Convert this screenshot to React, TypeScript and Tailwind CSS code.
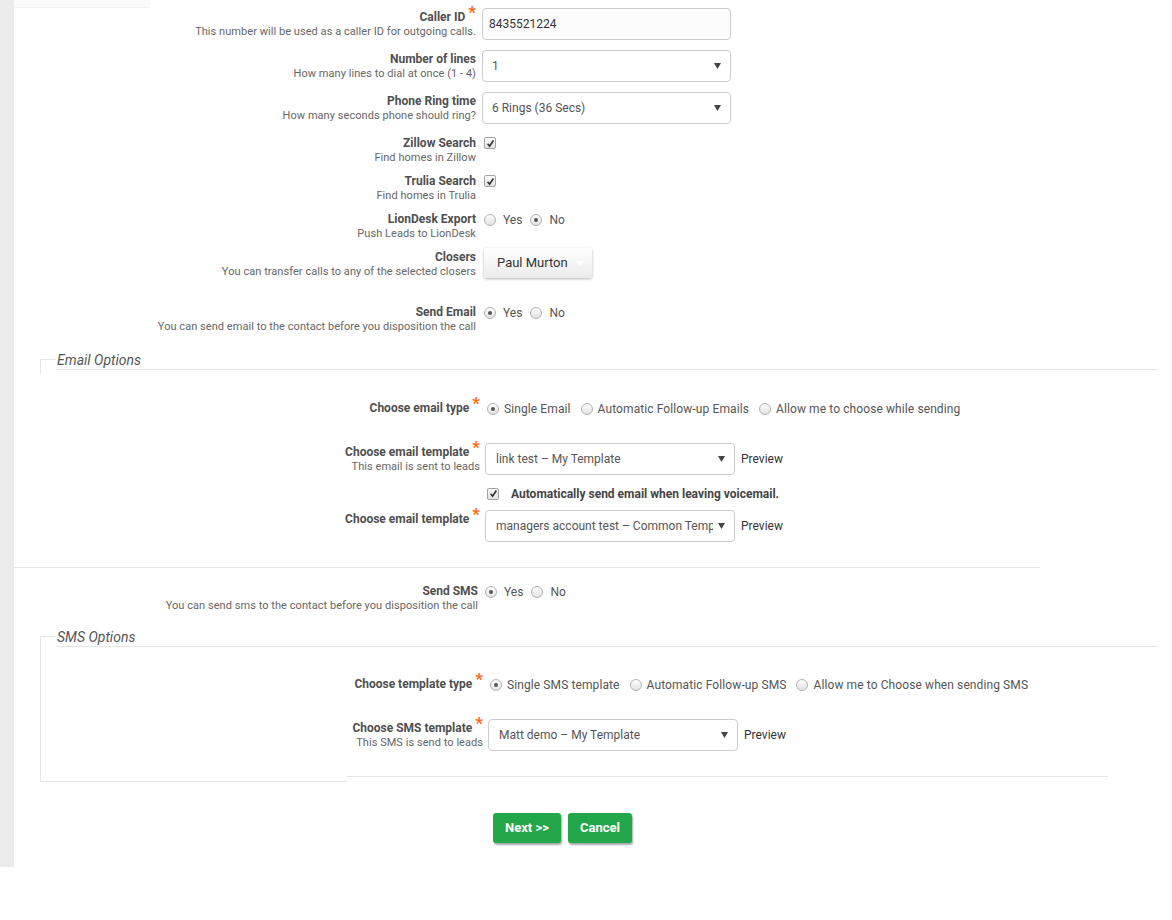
import React from 'react'

function Star() {
  return <span className="relative top-[-3px] ml-[3px] text-[17px] leading-[0] font-bold text-[#ff6a13]">*</span>
}

function Label({ title, desc, req, className }: { title: string; desc?: string; req?: boolean; className: string }) {
  return (
    <div className={`shrink-0 pt-[2px] text-right ${className}`}>
      <div className="text-[12px] leading-[15px] font-bold whitespace-nowrap text-[#4f4f4f]">
        {title}
        {req && <Star />}
      </div>
      {desc && <div className="text-[11px] leading-[14px] tracking-[0.05px] whitespace-nowrap text-[#666]">{desc}</div>}
    </div>
  )
}

function Caret() {
  return (
    <svg width="7" height="6" viewBox="0 0 7 6" className="shrink-0">
      <path d="M0 0h7L3.5 6z" fill="#444" />
    </svg>
  )
}

function Select({ value, className, textClass = '' }: { value: string; className: string; textClass?: string }) {
  return (
    <div className={`flex h-[32px] items-center justify-between rounded-[4px] border border-[#ccc] bg-white pr-[9px] text-[12px] text-[#555] ${className}`}>
      <span className={`overflow-hidden whitespace-nowrap ${textClass}`}>{value}</span>
      <Caret />
    </div>
  )
}

function Radio({ on }: { on?: boolean }) {
  return (
    <span className="flex h-[12px] w-[12px] shrink-0 items-center justify-center rounded-full border border-[#b3b3b3] bg-linear-to-b from-[#fdfdfd] to-[#e3e3e3]">
      {on && <span className="h-[4px] w-[4px] rounded-full bg-[#555]" />}
    </span>
  )
}

function Check() {
  return (
    <span className="flex h-[12px] w-[12px] shrink-0 items-center justify-center rounded-[2px] border border-[#a3a3a3] bg-linear-to-b from-white to-[#e2e2e2]">
      <svg width="9" height="9" viewBox="0 0 9 9">
        <path d="M1.6 4.8l2 2.4 3.8-5.6" fill="none" stroke="#333" strokeWidth="1.7" />
      </svg>
    </span>
  )
}

function Opt({ on, label, first }: { on?: boolean; label: string; first?: boolean }) {
  return (
    <span className={`flex items-center ${first ? '' : 'ml-[10px]'}`}>
      <Radio on={on} />
      <span className="ml-[5px] text-[12px] tracking-[0.1px] whitespace-nowrap text-[#555]">{label}</span>
    </span>
  )
}

function YesNo({ yes, className }: { yes: boolean; className: string }) {
  return (
    <div className={`mt-[2px] flex h-[15px] items-center text-[12px] text-[#555] ${className}`}>
      <Radio on={yes} />
      <span className="ml-[7px]">Yes</span>
      <span className="ml-[8px]"><Radio on={!yes} /></span>
      <span className="ml-[7px]">No</span>
    </div>
  )
}

function Legend({ text, stretch }: { text: string; stretch?: boolean }) {
  return (
    <div className="ml-[26px] flex items-start">
      <div className={`mt-[8px] w-[16px] border-t border-l border-[#e6e6e6] ${stretch ? 'self-stretch' : 'h-[15px]'}`} />
      <div className="flex-1 border-b border-[#e6e6e6] pl-[1px] text-[14px] leading-[18px] italic text-[#555]">{text}</div>
    </div>
  )
}

export default function App() {
  return (
    <div className="flex bg-white font-['Roboto',sans-serif]">
      <div className="w-[14px] shrink-0 bg-[#ebebeb]" />
      <div className="w-[1144px] pb-[24px]">
        <div className="h-[8px] w-[136px] border-b border-[#f2f2f2] bg-[#fafafa]" />

        <div className="flex items-start">
          <Label className="w-[462px]" title="Caller ID" req desc="This number will be used as a caller ID for outgoing calls." />
          <div className="ml-[6px] flex h-[32px] w-[249px] items-center rounded-[4px] border border-[#ccc] bg-[#fcfcfc] pl-[6px] text-[12px] text-[#333]">8435521224</div>
        </div>

        <div className="mt-[10px] flex items-start">
          <Label className="w-[462px]" title="Number of lines" desc="How many lines to dial at once (1 - 4)" />
          <Select className="ml-[6px] w-[249px] pl-[9px]" value="1" />
        </div>

        <div className="mt-[10px] flex items-start">
          <Label className="w-[462px]" title="Phone Ring time" desc="How many seconds phone should ring?" />
          <Select className="ml-[6px] w-[249px] pl-[9px]" value="6 Rings (36 Secs)" />
        </div>

        <div className="mt-[10px] flex items-start">
          <Label className="w-[462px]" title="Zillow Search" desc="Find homes in Zillow" />
          <div className="mt-[3px] ml-[8px]"><Check /></div>
        </div>

        <div className="mt-[7px] flex items-start">
          <Label className="w-[462px]" title="Trulia Search" desc="Find homes in Trulia" />
          <div className="mt-[3px] ml-[8px]"><Check /></div>
        </div>

        <div className="mt-[7px] flex items-start">
          <Label className="w-[462px]" title="LionDesk Export" desc="Push Leads to LionDesk" />
          <YesNo yes={false} className="ml-[8px]" />
        </div>

        <div className="mt-[7px] flex items-start">
          <Label className="w-[462px]" title="Closers" desc="You can transfer calls to any of the selected closers" />
          <div className="ml-[8px] flex h-[30px] w-[108px] items-center rounded-[2px] bg-linear-to-b from-white to-[#ebebeb] pl-[13px] text-[13px] text-[#333] shadow-[0_1px_3px_rgba(0,0,0,0.3)]">
            Paul Murton
            <svg width="8" height="5" viewBox="0 0 8 5" className="ml-[8px]">
              <path d="M0 0h8L4 5z" fill="#fff" />
            </svg>
          </div>
        </div>

        <div className="mt-[24px] flex items-start">
          <Label className="w-[462px]" title="Send Email" desc="You can send email to the contact before you disposition the call" />
          <YesNo yes className="ml-[8px]" />
        </div>

        <div className="mt-[17px]">
          <Legend text="Email Options" />
        </div>

        <div className="mt-[25px] flex items-start">
          <Label className="w-[466px]" title="Choose email type" req />
          <div className="mt-[2px] ml-[7px] flex h-[15px] items-center">
            <Opt first on label="Single Email" />
            <Opt label="Automatic Follow-up Emails" />
            <Opt label="Allow me to choose while sending" />
          </div>
        </div>

        <div className="mt-[27px] flex items-start">
          <Label className="w-[466px]" title="Choose email template" req desc="This email is sent to leads" />
          <div className="ml-[5px] flex items-center">
            <Select className="w-[250px] pl-[10px]" value="link test – My Template" />
            <span className="ml-[6px] text-[12px] text-[#333]">Preview</span>
          </div>
        </div>

        <div className="mt-[10px] ml-[473px] flex h-[17px] items-center">
          <Check />
          <span className="ml-[12px] text-[12px] font-bold text-[#444]">Automatically send email when leaving voicemail.</span>
        </div>

        <div className="mt-[8px] flex items-start">
          <Label className="w-[466px]" title="Choose email template" req />
          <div className="ml-[5px] flex items-center">
            <Select className="w-[250px] pl-[10px]" textClass="w-[217px]" value="managers account test – Common Template" />
            <span className="ml-[6px] text-[12px] text-[#333]">Preview</span>
          </div>
        </div>

        <div className="mt-[25px] w-[1026px] border-t border-[#e8e8e8]" />

        <div className="mt-[14px] flex items-start">
          <Label className="w-[464px]" title="Send SMS" desc="You can send sms to the contact before you disposition the call" />
          <YesNo yes className="ml-[7px]" />
        </div>

        <div className="mt-[15px]">
          <Legend text="SMS Options" stretch />
          <div className="ml-[26px] flex items-start">
            <div className="h-[135px] w-[307px] border-b border-l border-[#e6e6e6]" />
            <div className="w-[761px] border-b border-[#e6e6e6] pt-[28px] pb-[25px]">
              <div className="flex items-start">
                <Label className="w-[136px]" title="Choose template type" req />
                <div className="mt-[2px] ml-[7px] flex h-[15px] items-center">
                  <Opt first on label="Single SMS template" />
                  <Opt label="Automatic Follow-up SMS" />
                  <Opt label="Allow me to Choose when sending SMS" />
                </div>
              </div>
              <div className="mt-[27px] flex items-start">
                <Label className="w-[136px]" title="Choose SMS template" req desc="This SMS is send to leads" />
                <div className="ml-[5px] flex items-center">
                  <Select className="w-[250px] pl-[10px]" value="Matt demo – My Template" />
                  <span className="ml-[6px] text-[12px] text-[#333]">Preview</span>
                </div>
              </div>
            </div>
          </div>
        </div>

        <div className="mt-[31px] ml-[479px] flex gap-[7px]">
          <button className="h-[30px] w-[68px] rounded-[3px] bg-[#22a84a] text-[13px] font-bold text-white shadow-[1px_2px_2px_rgba(0,0,0,0.35)]">Next &gt;&gt;</button>
          <button className="h-[30px] w-[64px] rounded-[3px] bg-[#22a84a] text-[13px] font-bold text-white shadow-[1px_2px_2px_rgba(0,0,0,0.35)]">Cancel</button>
        </div>
      </div>
    </div>
  )
}
